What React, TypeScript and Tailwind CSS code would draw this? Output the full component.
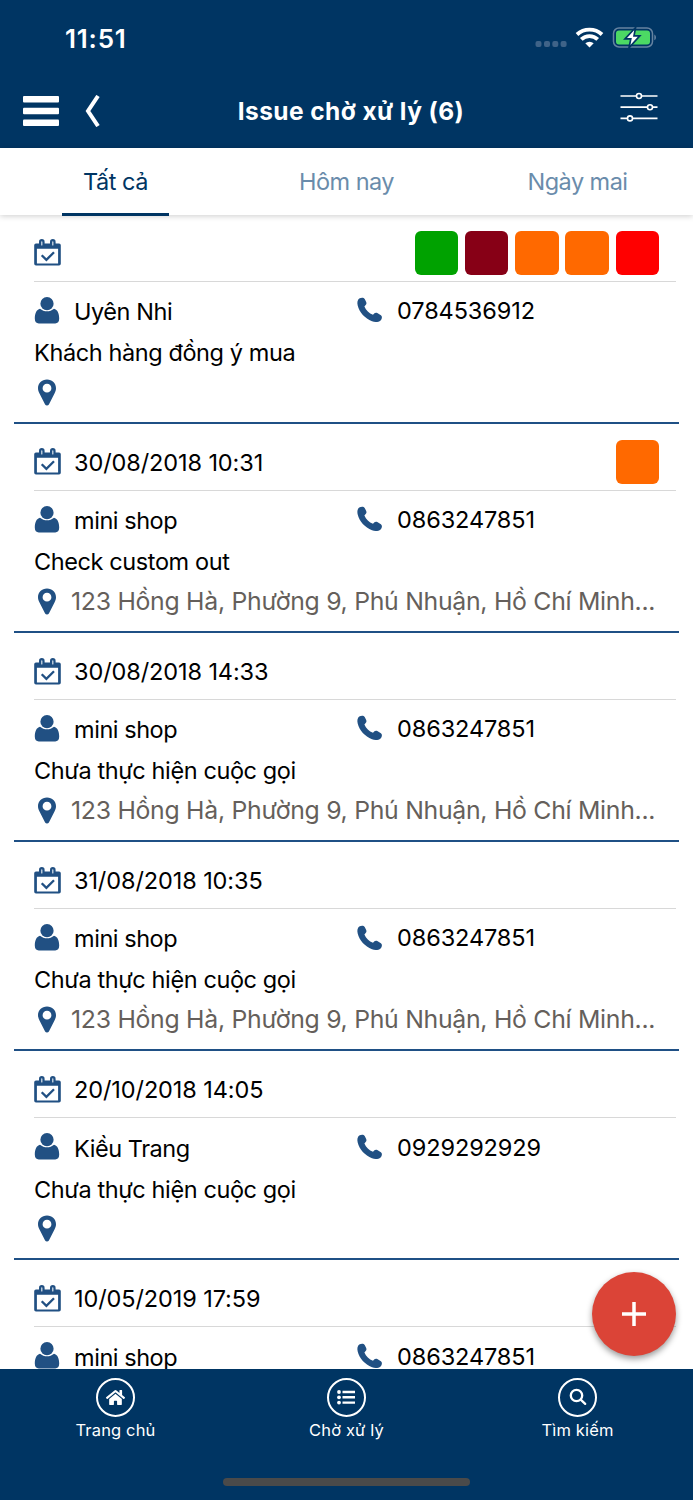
import { FaHome } from "react-icons/fa";

interface Issue {
  time: string;
  name: string;
  phone: string;
  note: string;
  address: string;
  tags: string[];
}

const ADDRESS = "123 Hồng Hà, Phường 9, Phú Nhuận, Hồ Chí Minh...";

const issues: Issue[] = [
  { time: "", name: "Uyên Nhi", phone: "0784536912", note: "Khách hàng đồng ý mua", address: "", tags: ["#00a200", "#870016", "#ff6900", "#ff6900", "#ff0000"] },
  { time: "30/08/2018 10:31", name: "mini shop", phone: "0863247851", note: "Check custom out", address: ADDRESS, tags: ["#ff6900"] },
  { time: "30/08/2018 14:33", name: "mini shop", phone: "0863247851", note: "Chưa thực hiện cuộc gọi", address: ADDRESS, tags: [] },
  { time: "31/08/2018 10:35", name: "mini shop", phone: "0863247851", note: "Chưa thực hiện cuộc gọi", address: ADDRESS, tags: [] },
  { time: "20/10/2018 14:05", name: "Kiều Trang", phone: "0929292929", note: "Chưa thực hiện cuộc gọi", address: "", tags: [] },
  { time: "10/05/2019 17:59", name: "mini shop", phone: "0863247851", note: "", address: "", tags: [] },
];

function CalendarIcon() {
  return (
    <svg width="27" height="27" viewBox="0 0 27 27" className="shrink-0">
      <path fillRule="evenodd" fill="#215083" d="M2 4.500h23a1.800 1.800 0 0 1 1.800 1.800v18.400A1.800 1.800 0 0 1 25 26.500H2A1.800 1.800 0 0 1 .2 24.700V6.300A1.800 1.800 0 0 1 2 4.500ZM2.900 9.800v14.600h21.200V9.800Z" />
      <rect x="6.100" y="1.200" width="3.400" height="6.400" rx="1.700" fill="#dfe7ee" stroke="#215083" strokeWidth="2.200" />
      <rect x="17.100" y="1.200" width="3.400" height="6.400" rx="1.700" fill="#dfe7ee" stroke="#215083" strokeWidth="2.200" />
      <path d="m7.700 16.200 4.700 4.700 7.600-7.700" fill="none" stroke="#215083" strokeWidth="2.300" />
    </svg>
  );
}

function PersonIcon() {
  return (
    <svg width="26" height="27" viewBox="0 0 26 27" className="shrink-0" fill="#215083">
      <circle cx="13" cy="6.700" r="6.600" />
      <path d="M6 11.800c4 3.400 10 3.400 14 0 3.500.8 5.200 4.700 5.200 9.700 0 3.300-1.500 4.900-4 4.900H4.800c-2.500 0-4-1.600-4-4.900 0-5 1.700-8.900 5.200-9.700Z" />
    </svg>
  );
}

function PhoneIcon() {
  return (
    <svg width="26" height="26" viewBox="0 0 26 26" className="shrink-0" fill="#215083">
      <path d="M2.200 1.600C4.200.4 6.600.3 7.700 1.900l1.500 3.200c.8 1.800-.2 3-1.800 4.300 1.600 3.900 4.700 6.900 8.600 8.400 1.400-1.800 2.500-2.600 4.300-1.700l3.600 2.100c1.600 1.100 1.200 3.700-.3 5.200-2 1.700-5.500 2-8.600.9C8 21.500 2.300 15.600.7 8.600 0 5.600.4 3.100 2.200 1.600Z" />
    </svg>
  );
}

function PinIcon() {
  return (
    <svg width="26" height="27" viewBox="0 0 26 27" className="shrink-0">
      <path fillRule="evenodd" fill="#215083" d="M13 .5c5.200 0 9 3.900 9 8.800 0 2-.7 3.600-1.500 5.200l-5.600 11c-.8 1.300-3 1.300-3.800 0l-5.600-11C4.700 12.900 4 11.300 4 9.300 4 4.400 7.800.5 13 .5Zm0 4.300a4.400 4.400 0 1 0 0 8.800 4.400 4.400 0 0 0 0-8.800Z" />
    </svg>
  );
}

function StatusIcons() {
  return (
    <svg width="122" height="24" viewBox="0 0 122 24">
      <g fill="#3f6388">
        <rect x="0.500" y="15" width="6" height="6" rx="2" />
        <rect x="9" y="15" width="6" height="6" rx="2" />
        <rect x="17.300" y="15" width="6" height="6" rx="2" />
        <rect x="25.600" y="15" width="6" height="6" rx="2" />
      </g>
      <g fill="none" stroke="#fff" strokeWidth="3.800">
        <path d="M42 8.500a18.200 18.200 0 0 1 25 0" />
        <path d="M46.300 13.400a11.700 11.700 0 0 1 16.400 0" />
      </g>
      <path d="M50.300 17.300a6.200 6.200 0 0 1 8.400 0L54.500 21.500Z" fill="#fff" />
      <rect x="78.500" y="2" width="39" height="19" rx="5.500" fill="none" stroke="#6683a1" strokeWidth="1.500" />
      <rect x="81" y="4.500" width="34" height="14" rx="3" fill="#4cd964" />
      <path d="M119.300 8.500c2.200.8 2.200 5 0 5.800Z" fill="#6683a1" />
      <path d="M100.600 1.500 90 12.900h5.800L94 21.800l10.800-11.900H99Z" fill="#fff" stroke="#003563" strokeWidth="1.700" />
    </svg>
  );
}

function MenuIcon() {
  return (
    <svg width="36" height="30" viewBox="0 0 36 30" fill="#fff">
      <rect y="0" width="36" height="6.500" rx="1" />
      <rect y="11.700" width="36" height="6.500" rx="1" />
      <rect y="23.400" width="36" height="6.500" rx="1" />
    </svg>
  );
}

function FilterIcon() {
  return (
    <svg width="38" height="30" viewBox="0 0 38 30" stroke="#fff" fill="#003563">
      <path d="M.5 4h37M.5 15.200h37M.5 26.400h37" strokeWidth="1.700" />
      <circle cx="19" cy="4" r="2.500" strokeWidth="1.600" />
      <circle cx="30" cy="15.200" r="2.500" strokeWidth="1.600" />
      <circle cx="10" cy="26.400" r="2.500" strokeWidth="1.600" />
    </svg>
  );
}

function IssueCard({ issue }: { issue: Issue }) {
  return (
    <div className="mx-3.5 box-border h-[209.2px] shrink-0 border-b-2 border-[#1f5085] pl-5 pr-[3px] text-[23.5px] text-black">
      <div className="flex h-[67px] items-center border-b border-[#d8d8d8] pt-[10.5px] pr-[17px]">
        <CalendarIcon />
        <span className="ml-[13px] flex-1 pt-px tracking-[-0.1px]">{issue.time}</span>
        <div className="flex gap-[6.7px]">
          {issue.tags.map((color, i) => (
            <div key={i} className="size-[43.5px] rounded-md" style={{ backgroundColor: color }} />
          ))}
        </div>
      </div>
      <div className="flex h-[57px] items-center">
        <PersonIcon />
        <span className="ml-3.5 w-[283px] pt-[3px] tracking-[-0.45px]">{issue.name}</span>
        <PhoneIcon />
        <span className="ml-3.5 pt-px tracking-[-0.1px]">{issue.phone}</span>
      </div>
      <p className="flex h-[27px] items-center whitespace-nowrap pt-px tracking-[-0.4px]">{issue.note}</p>
      <div className="flex h-[53px] items-center text-[24.8px] text-[#655f5b]">
        <PinIcon />
        <span className="ml-[11px] whitespace-nowrap tracking-[-0.28px]">{issue.address}</span>
      </div>
    </div>
  );
}

const tabs = [
  { label: "Tất cả", active: true },
  { label: "Hôm nay", active: false },
  { label: "Ngày mai", active: false },
];

const navItems = [
  { label: "Trang chủ", icon: <FaHome size={19} /> },
  {
    label: "Chờ xử lý",
    icon: (
      <svg width="19" height="15" viewBox="0 0 19 15" fill="#fff">
        <circle cx="2" cy="2" r="1.900" />
        <circle cx="2" cy="7.300" r="1.900" />
        <circle cx="2" cy="12.600" r="1.900" />
        <path d="M5.500.8H18v2.400H5.500zM5.500 6.100H18v2.400H5.500zM5.500 11.400H18v2.400H5.500z" />
      </svg>
    ),
  },
  {
    label: "Tìm kiếm",
    icon: (
      <svg width="18" height="18" viewBox="0 0 18 18" fill="none" stroke="#fff" strokeWidth="2.300">
        <circle cx="7.500" cy="7.500" r="5.700" />
        <path d="m11.700 11.700 4.500 4.200" strokeLinecap="round" />
      </svg>
    ),
  },
];

export default function App() {
  return (
    <div className="relative flex h-[1500px] w-[693px] flex-col overflow-hidden bg-white font-['Inter','Noto_Sans',sans-serif] leading-none">
      <header className="h-[147.5px] shrink-0 bg-[#003563] text-white">
        <div className="flex h-[75px] items-center justify-between pl-[65px] pr-[36px]">
          <span className="pt-0.5 text-[26px] font-semibold tracking-[0.8px]">11:51</span>
          <StatusIcons />
        </div>
        <div className="grid h-[72px] grid-cols-[1fr_auto_1fr] items-center pl-[23px] pr-[35px]">
          <div className="flex items-center gap-[26px]">
            <MenuIcon />
            <svg width="15" height="32" viewBox="0 0 15 32" fill="none" stroke="#fff" strokeWidth="4">
              <path d="M13 1 3 16l10 15" />
            </svg>
          </div>
          <h1 className="ml-[21px] pt-px text-[24.5px] font-bold tracking-[0.42px]">Issue chờ xử lý (6)</h1>
          <div className="flex justify-end pb-2"><FilterIcon /></div>
        </div>
      </header>

      <nav className="z-10 grid h-[67px] shrink-0 grid-cols-3 bg-white shadow-[0_1px_6px_rgba(0,0,0,0.2)]">
        {tabs.map((t) => (
          <div key={t.label} className="flex flex-col items-center">
            <span className={t.active ? "flex h-[65px] items-center pt-[3px] text-[23.5px] tracking-[-0.45px] text-[#003563]" : "flex h-[65px] items-center pt-[3px] text-[23.5px] tracking-[-0.55px] text-[#6a8cab]"}>
              {t.label}
            </span>
            {t.active && <div className="h-[3.5px] w-[107px] shrink-0 bg-[#003563]" />}
          </div>
        ))}
      </nav>

      <main className="flex h-[1154.5px] shrink-0 flex-col overflow-hidden">
        {issues.map((issue, i) => (
          <IssueCard key={i} issue={issue} />
        ))}
      </main>

      <button className="absolute top-[1272px] left-[592px] z-20 flex size-[84px] items-center justify-center rounded-full bg-[#db4437] shadow-[0_3px_6px_rgba(0,0,0,0.4)]">
        <svg width="24" height="24" viewBox="0 0 24 24" stroke="#fff" strokeWidth="3.500">
          <path d="M12 0v24M0 12h24" />
        </svg>
      </button>

      <footer className="flex h-[131px] shrink-0 flex-col items-center bg-[#003563] text-white">
        <div className="grid w-full grid-cols-3">
          {navItems.map((n) => (
            <div key={n.label} className="flex flex-col items-center pt-[8.5px]">
              <div className="flex size-[39.5px] items-center justify-center rounded-full border-2 border-white">{n.icon}</div>
              <span className="mt-[3px] text-[16.5px] leading-5 tracking-[0.15px]">{n.label}</span>
            </div>
          ))}
        </div>
        <div className="mt-auto mb-[14px] h-2 w-[247px] rounded-full bg-[#4a4a4a]" />
      </footer>
    </div>
  );
}
